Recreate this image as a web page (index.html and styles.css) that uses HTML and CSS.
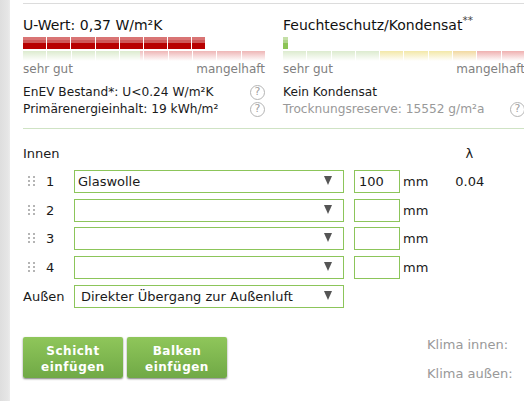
FILE: index.html
```html
<!DOCTYPE html>
<html lang="de">
<head>
<meta charset="utf-8">
<title>U-Wert</title>
<link rel="stylesheet" href="styles.css">
</head>
<body>
<main class="panel">
  <section class="results">
    <div class="result">
      <h2 class="result-title">U-Wert: 0,37 W/m²K</h2>
      <div class="meter">
        <i class="bar red"></i><i class="bar red"></i><i class="bar red"></i><i class="bar red"></i><i class="bar red"></i><i class="bar red"></i><i class="bar red"></i><i class="bar red short"></i>
      </div>
      <div class="scale">
        <i class="seg g"></i><i class="seg g"></i><i class="seg g"></i><i class="seg g"></i><i class="seg gr"></i><i class="seg r"></i><i class="seg r"></i><i class="seg r"></i><i class="seg r"></i><i class="seg r"></i>
      </div>
      <div class="scale-labels"><span>sehr gut</span><span>mangelhaft</span></div>
      <div class="info"><span>EnEV Bestand*: U&lt;0.24 W/m²K</span><span class="help">?</span></div>
      <div class="info"><span>Primärenergieinhalt: 19 kWh/m²</span><span class="help">?</span></div>
    </div>
    <div class="result">
      <h2 class="result-title">Feuchteschutz/Kondensat<sup class="stars">**</sup></h2>
      <div class="meter">
        <i class="bar green"></i>
      </div>
      <div class="scale">
        <i class="seg g"></i><i class="seg g"></i><i class="seg g"></i><i class="seg g"></i><i class="seg y"></i><i class="seg y"></i><i class="seg y"></i><i class="seg o"></i><i class="seg r2"></i><i class="seg r2"></i>
      </div>
      <div class="scale-labels"><span>sehr gut</span><span>mangelhaft</span></div>
      <div class="info"><span>Kein Kondensat</span></div>
      <div class="info muted"><span>Trocknungsreserve: 15552 g/m²a</span><span class="help">?</span></div>
    </div>
  </section>

  <section class="layers">
    <div class="layers-head"><span>Innen</span><span class="lambda">λ</span></div>
    <div class="row">
      <svg class="grip" width="7" height="11" viewBox="0 0 7 11"><path d="M0 0h2v2H0zM5 0h2v2H5zM0 4h2v2H0zM5 4h2v2H5zM0 8h2v2H0zM5 8h2v2H5z"/></svg>
      <span class="num">1</span>
      <div class="select"><span>Glaswolle</span><i class="caret"></i></div>
      <div class="field">100</div>
      <span class="unit">mm</span>
      <span class="lambda-value">0.04</span>
    </div>
    <div class="row">
      <svg class="grip" width="7" height="11" viewBox="0 0 7 11"><path d="M0 0h2v2H0zM5 0h2v2H5zM0 4h2v2H0zM5 4h2v2H5zM0 8h2v2H0zM5 8h2v2H5z"/></svg>
      <span class="num">2</span>
      <div class="select"><span></span><i class="caret"></i></div>
      <div class="field"></div>
      <span class="unit">mm</span>
    </div>
    <div class="row">
      <svg class="grip" width="7" height="11" viewBox="0 0 7 11"><path d="M0 0h2v2H0zM5 0h2v2H5zM0 4h2v2H0zM5 4h2v2H5zM0 8h2v2H0zM5 8h2v2H5z"/></svg>
      <span class="num">3</span>
      <div class="select"><span></span><i class="caret"></i></div>
      <div class="field"></div>
      <span class="unit">mm</span>
    </div>
    <div class="row">
      <svg class="grip" width="7" height="11" viewBox="0 0 7 11"><path d="M0 0h2v2H0zM5 0h2v2H5zM0 4h2v2H0zM5 4h2v2H5zM0 8h2v2H0zM5 8h2v2H5z"/></svg>
      <span class="num">4</span>
      <div class="select"><span></span><i class="caret"></i></div>
      <div class="field"></div>
      <span class="unit">mm</span>
    </div>
    <div class="row outer">
      <span class="outer-label">Außen</span>
      <div class="select wide"><span>Direkter Übergang zur Außenluft</span><i class="caret"></i></div>
    </div>
  </section>

  <section class="footer">
    <div class="buttons">
      <button class="btn" type="button">Schicht<br>einfügen</button>
      <button class="btn" type="button">Balken<br>einfügen</button>
    </div>
    <div class="climate">
      <div>Klima innen:</div>
      <div>Klima außen:</div>
    </div>
  </section>
</main>
</body>
</html>
```
FILE: styles.css
```css
* { box-sizing: border-box; }
html, body { margin: 0; height: 100%; overflow: hidden; background: #fff; }
body {
  font-family: "DejaVu Sans", sans-serif;
  font-size: 13px;
  color: #1a1a1a;
  background: linear-gradient(to right, #dedede 0, #e6e6e6 8px, #ececec 10px, #fff 10px);
}
.panel { margin-left: 10px; padding: 3px 0 0 13px; width: 514px; background: #fff; height: 401px; }

.results {
  display: flex;
  border-top: 1px solid #dcdcdc;
  border-bottom: 1px solid #cfe3c4;
  height: 126px;
  width: 501px;
  overflow: hidden;
}
.result { flex: 0 0 242px; padding-top: 11px; }
.result + .result { margin-left: 18px; }
.result-title { margin: 0; font-weight: 400; font-size: 14px; line-height: 20px; height: 22px; color: #111; white-space: nowrap; }
.stars { font-size: 10.5px; line-height: 0; color: #444; }

.meter { display: flex; gap: 1px; height: 12px; }
.bar { display: block; width: 23.2px; height: 12px; }
.bar.short { width: 13px; }
.red { background: linear-gradient(to bottom, #d97474 0 3px, #cf5858 3px 6px, #b80000 6px); }
.green { width: 5px; background: linear-gradient(to bottom, #c4dfa6 0 3px, #afd48a 3px 6px, #8cc455 6px); }

.scale { display: flex; gap: 1px; height: 10px; margin-top: 2px; }
.seg { display: block; flex: 1 1 0; height: 10px; }
.g { background: linear-gradient(to bottom, #dcebcf, #fff); }
.gr { background: linear-gradient(to right, #dcebcf 0 86%, #eec0c0 86%); -webkit-mask-image: linear-gradient(to bottom, #000, transparent); mask-image: linear-gradient(to bottom, #000, transparent); }
.r { background: linear-gradient(to bottom, #eeb6b6, #fff); }
.y { background: linear-gradient(to bottom, #f3e8a8, #fff); }
.o { background: linear-gradient(to bottom, #f2d9a0, #fff); }
.r2 { background: linear-gradient(to bottom, #efb0b0, #fff); }

.scale-labels { display: flex; justify-content: space-between; color: #808080; font-size: 12px; line-height: 16px; height: 16px; margin-bottom: 6px; white-space: nowrap; }
.info { display: flex; justify-content: space-between; align-items: center; height: 18px; font-size: 12.2px; white-space: nowrap; color: #1a1a1a; }
.info + .info { margin-top: -1px; }
.info.muted { color: #999; }
.help {
  flex: none;
  width: 15px; height: 15px;
  border: 1.5px solid #b4b4b4;
  border-radius: 50%;
  color: #a0a0a0;
  font-size: 11px;
  font-weight: 400;
  line-height: 12px;
  text-align: center;
}

.layers { padding-top: 16px; }
.layers-head { display: flex; height: 20px; line-height: 18px; margin-bottom: 5px; }
.layers-head .lambda { margin-left: 406px; }
.row { display: flex; align-items: center; height: 23px; margin-bottom: 5.7px; }
.grip { flex: none; fill: #b5b5b5; margin-left: 5px; }
.num { width: 39px; padding-left: 11px; flex: none; }
.select {
  flex: none;
  display: flex;
  justify-content: space-between;
  align-items: center;
  width: 270px;
  height: 23px;
  border: 1px solid #8cc55a;
  padding: 0 11px 0 3px;
  background: #fff;
}
.caret { width: 0; height: 0; border-left: 4.5px solid transparent; border-right: 4.5px solid transparent; border-top: 9px solid #555; margin-top: -2px; }
.field { flex: none; width: 46px; height: 23px; border: 1px solid #8cc55a; margin-left: 10px; padding-left: 4px; line-height: 21px; }
.unit { margin-left: 3px; }
.lambda-value { margin-left: 27px; }
.outer-label { width: 51px; flex: none; }
.select.wide { padding-left: 6px; }

.footer { display: flex; justify-content: space-between; margin-top: 29.5px; padding-right: 0; }
.buttons { display: flex; gap: 4px; }
.btn {
  width: 100px;
  height: 41px;
  border: 0;
  border-radius: 2px;
  padding: 2px 0 0;
  background: linear-gradient(to bottom, #8fc65a, #70a946);
  box-shadow: 0 1px 2px rgba(0, 0, 0, 0.5);
  color: #fff;
  font-family: "DejaVu Sans", sans-serif;
  font-size: 12px;
  font-weight: 700;
  line-height: 16px;
  letter-spacing: 0.5px;
}
.climate { color: #999; line-height: 29px; margin-top: -7px; width: 97px; white-space: nowrap; }
```
